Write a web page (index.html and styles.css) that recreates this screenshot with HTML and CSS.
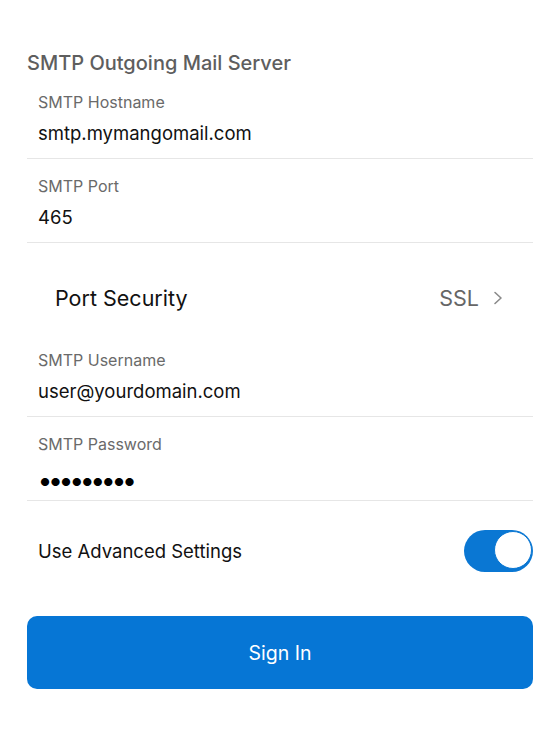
FILE: index.html
```html
<!DOCTYPE html>
<html>
<head>
	<meta charset="UTF-8">
	<title>SMTP Settings</title>
	<link rel="stylesheet" href="styles.css">
</head>
<body>
<div class="screen">
	<h2 class="section-title">SMTP Outgoing Mail Server</h2>

	<div class="field">
		<div class="field-label">SMTP Hostname</div>
		<div class="field-value">smtp.mymangomail.com</div>
	</div>
	<div class="field">
		<div class="field-label">SMTP Port</div>
		<div class="field-value">465</div>
	</div>

	<div class="picker">
		<span class="picker-name">Port Security</span>
		<span class="picker-value">SSL</span>
		<svg class="chevron" width="10" height="14" viewBox="0 0 10 14"><polyline points="2,1.5 8,7 2,12.5" fill="none" stroke="#8a8a8a" stroke-width="1.6" stroke-linecap="round" stroke-linejoin="round"/></svg>
	</div>

	<div class="field">
		<div class="field-label">SMTP Username</div>
		<div class="field-value">user@yourdomain.com</div>
	</div>
	<div class="field">
		<div class="field-label">SMTP Password</div>
		<div class="field-value dots">●●●●●●●●●</div>
	</div>

	<div class="switch-row">
		<span class="switch-name">Use Advanced Settings</span>
		<span class="switch on"><span class="knob"></span></span>
	</div>

	<button class="sign-in">Sign In</button>
</div>
</body>
</html>
```

FILE: styles.css
```css
body{margin:0; background:#fff; font-family:Inter, "Liberation Sans", sans-serif; -webkit-font-smoothing:antialiased;}

.screen{width:506px; padding:51px 27px 0;}

.section-title{margin:0; font-size:20px; line-height:24px; font-weight:500; color:#5e5e5e;}

.field{padding:17px 11px 0; height:66px; border-bottom:1px solid #e6e6e6;}
.field-label{font-size:16px; line-height:20px; color:#6a6a6a;}
.field-value{margin-top:9px; font-size:18.5px; line-height:24px; color:#111;}
.field-value.dots{margin:16px 0 0 2px; font-size:11px; letter-spacing:0.5px; color:#000;}

.picker{display:flex; align-items:center; height:24px; padding:43px 30px 23px 28px;}
.picker-name{flex:1; font-size:21.5px; color:#111;}
.picker-value{font-size:21.5px; color:#666;}
.chevron{margin-left:14px;}

.switch-row{display:flex; align-items:center; justify-content:space-between; padding:28px 0 0 11px; height:43px;}
.switch-name{font-size:18.5px; color:#111;}
.switch{display:flex; justify-content:flex-end; width:69px; height:42px; box-sizing:border-box; border-radius:21px; background:#0a77d3; padding:1px;}
.knob{width:36px; height:36px; border:1px solid #0a77d3; border-radius:50%; background:#fff;}

.sign-in{display:block; width:100%; height:73px; margin-top:44px; border:0; border-radius:10px; background:#0676d5; color:#fff; font-family:inherit; font-size:19.5px;}
```
